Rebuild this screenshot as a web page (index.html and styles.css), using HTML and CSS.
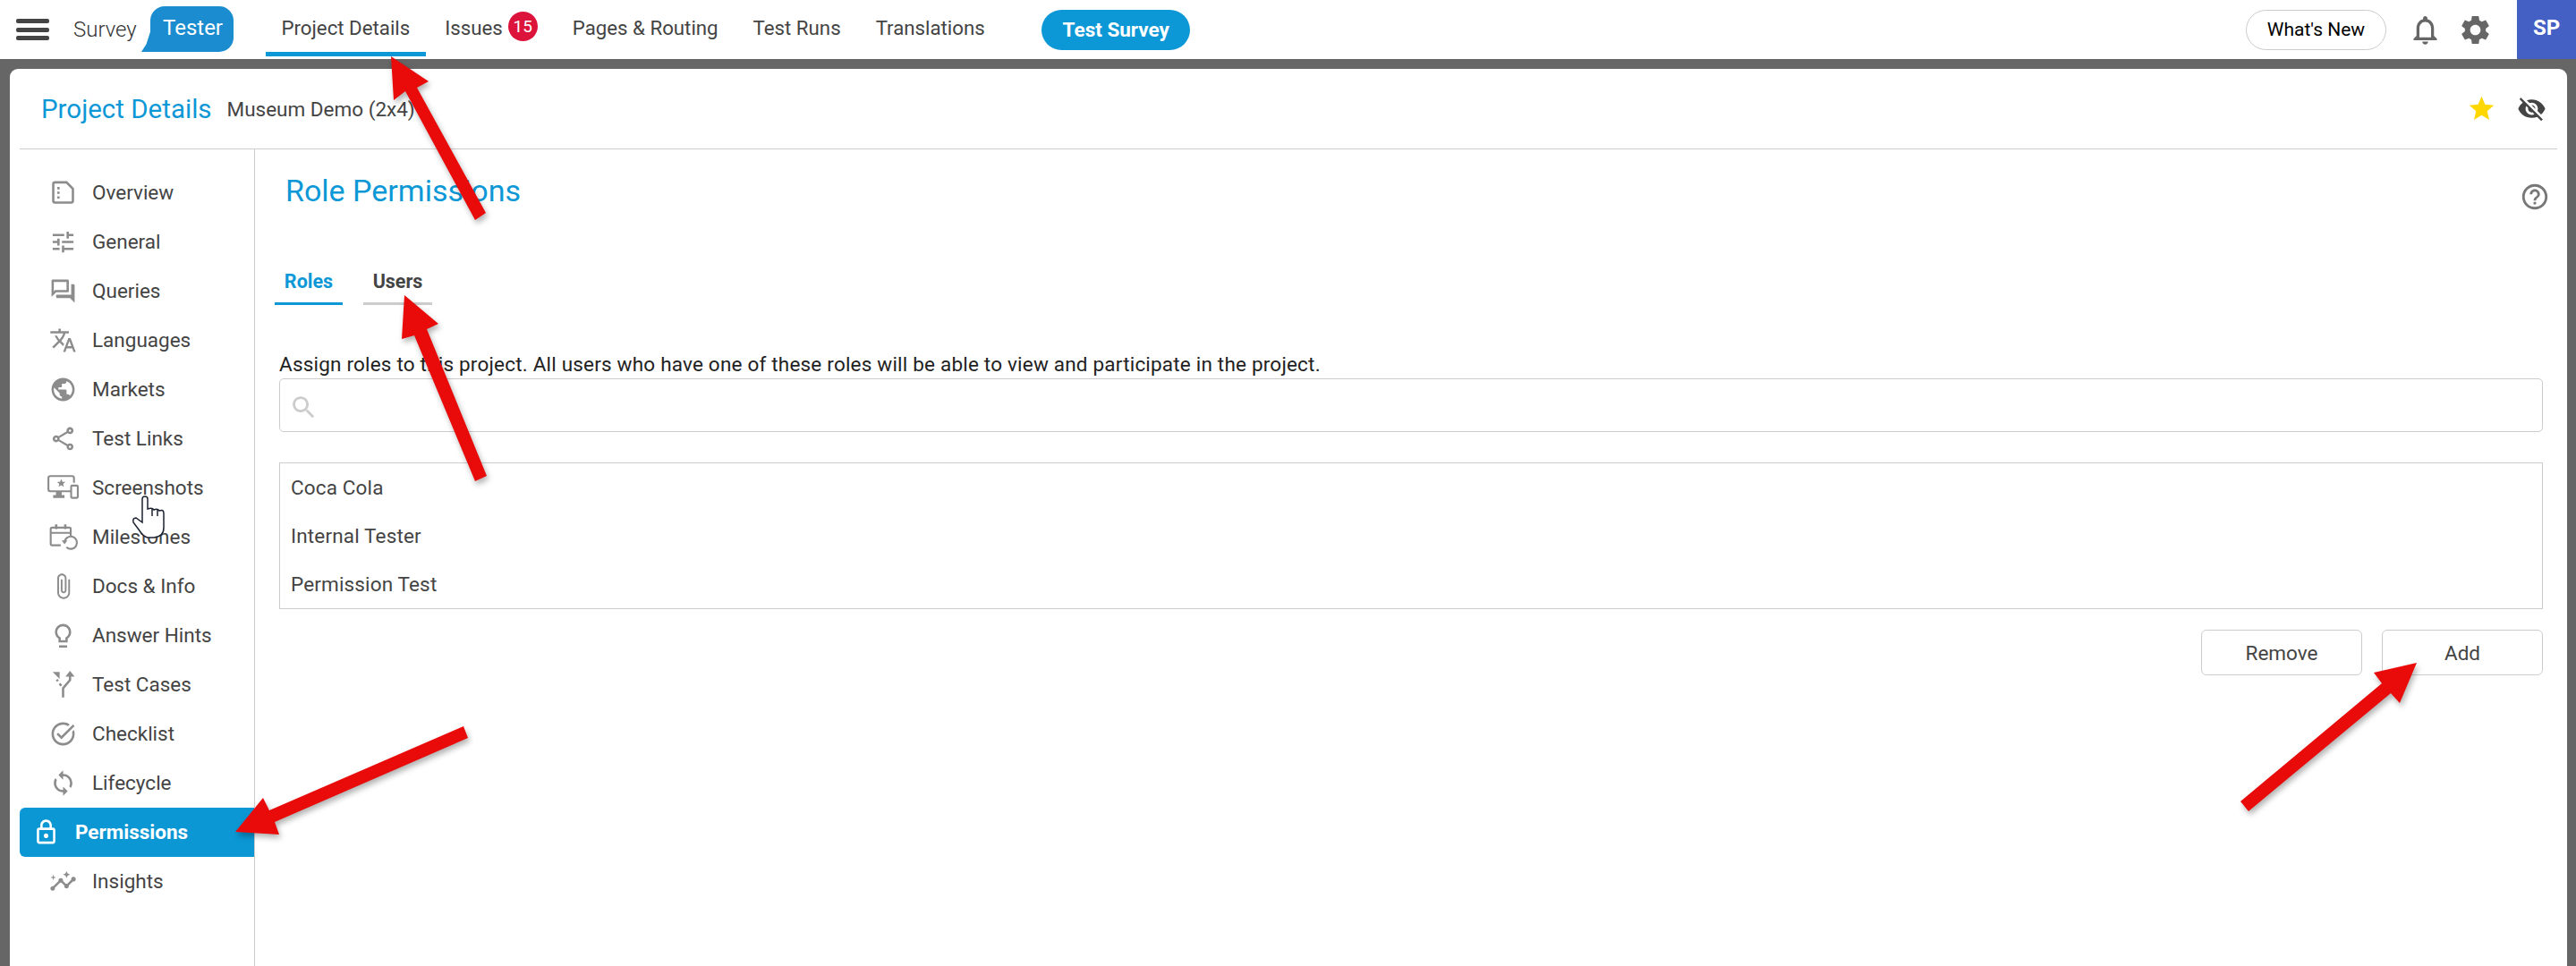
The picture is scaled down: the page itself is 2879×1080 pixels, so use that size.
FILE: index.html
```html
<!DOCTYPE html>
<html lang="en">
<head>
  <meta charset="UTF-8">
  <title>Project Details - Role Permissions</title>
  <link rel="stylesheet" href="styles.css">
</head>
<body>

  <!-- top bar -->
  <header class="topbar">
    <div class="hamburger"><span></span><span></span><span></span></div>
    <span class="brand-survey">Survey</span>
    <span class="brand-tester">Tester</span>
    <nav class="topnav">
      <a class="topnav-item active">Project Details</a>
      <a class="topnav-item">Issues <span class="badge">15</span></a>
      <a class="topnav-item">Pages &amp; Routing</a>
      <a class="topnav-item">Test Runs</a>
      <a class="topnav-item">Translations</a>
    </nav>
    <button class="test-survey">Test Survey</button>
    <div class="topbar-right">
      <button class="whats-new">What's New</button>
      <svg class="top-icon bell" viewBox="0 0 24 24"><path d="M12 22c1.1 0 2-.9 2-2h-4c0 1.1.9 2 2 2zm6-6v-5c0-3.07-1.63-5.64-4.5-6.32V4c0-.83-.67-1.5-1.5-1.5s-1.5.67-1.5 1.5v.68C7.64 5.36 6 7.92 6 11v5l-2 2v1h16v-1l-2-2zm-2 1H8v-6c0-2.48 1.51-4.5 4-4.5s4 2.02 4 4.5v6z"/></svg>
      <svg class="top-icon gear" viewBox="0 0 24 24"><path d="M19.14 12.94c.04-.3.06-.61.06-.94 0-.32-.02-.64-.07-.94l2.03-1.58c.18-.14.23-.41.12-.61l-1.92-3.32c-.12-.22-.37-.29-.59-.22l-2.39.96c-.5-.38-1.03-.7-1.62-.94l-.36-2.54c-.04-.24-.24-.41-.48-.41h-3.84c-.24 0-.43.17-.47.41l-.36 2.54c-.59.24-1.13.57-1.62.94l-2.39-.96c-.22-.08-.47 0-.59.22L2.74 8.87c-.12.21-.08.47.12.61l2.03 1.58c-.05.3-.09.63-.09.94s.02.64.07.94l-2.03 1.58c-.18.14-.23.41-.12.61l1.92 3.32c.12.22.37.29.59.22l2.39-.96c.5.38 1.03.7 1.62.94l.36 2.54c.05.24.24.41.48.41h3.84c.24 0 .44-.17.47-.41l.36-2.54c.59-.24 1.13-.56 1.62-.94l2.39.96c.22.08.47 0 .59-.22l1.92-3.32c.12-.22.07-.47-.12-.61l-2.01-1.58zM12 15.6c-1.98 0-3.6-1.62-3.6-3.6s1.62-3.6 3.6-3.6 3.6 1.62 3.6 3.6-1.62 3.6-3.6 3.6z"/></svg>
      <div class="avatar">SP</div>
    </div>
  </header>

  <div class="shell">
    <div class="panel">

      <div class="panel-head">
        <span class="panel-title">Project Details</span>
        <span class="panel-sub">Museum Demo (2x4)</span>
        <svg class="head-icon star" viewBox="0 0 24 24"><path d="M12 17.27L18.18 21l-1.64-7.03L22 9.24l-7.19-.61L12 2 9.19 8.63 2 9.24l5.46 4.73L5.82 21z"/></svg>
        <svg class="head-icon eye" viewBox="0 0 24 24"><path d="M12 7c2.76 0 5 2.24 5 5 0 .65-.13 1.26-.36 1.83l2.92 2.92c1.51-1.26 2.7-2.89 3.43-4.75-1.73-4.39-6-7.5-11-7.5-1.4 0-2.74.25-3.98.7l2.16 2.16C10.74 7.13 11.35 7 12 7zM2 4.27l2.28 2.28.46.46C3.08 8.3 1.78 10.02 1 12c1.73 4.39 6 7.5 11 7.5 1.55 0 3.03-.3 4.38-.84l.42.42L19.73 22 21 20.73 3.27 3 2 4.27zM7.53 9.8l1.55 1.55c-.05.21-.08.43-.08.65 0 1.66 1.34 3 3 3 .22 0 .44-.03.65-.08l1.55 1.55c-.67.33-1.41.53-2.2.53-2.76 0-5-2.24-5-5 0-.79.2-1.53.53-2.2zm4.31-.78l3.15 3.15.02-.16c0-1.66-1.34-3-3-3l-.17.01z"/></svg>
      </div>

      <div class="panel-body">

        <!-- side menu -->
        <aside class="sidebar">
          <a class="side-item"><span class="side-icon"><svg viewBox="0 0 24 24"><path class="line" d="M3.5 4.5a1.5 1.5 0 0 1 1.5-1.5h10l5.500 5.500v10.500a1.500 1.500 0 0 1-1.500 1.500h-14a1.500 1.500 0 0 1-1.500-1.500z"/><path d="M7 7h2v2H7zM7 11h2v2H7zM7 15h2v2H7z"/></svg></span>Overview</a>
          <a class="side-item"><span class="side-icon"><svg viewBox="0 0 24 24"><path d="M3 17v2h6v-2H3zM3 5v2h10V5H3zm10 16v-2h8v-2h-8v-2h-2v6h2zM7 9v2H3v2h4v2h2V9H7zm14 4v-2H11v2h10zm-6-4h2V7h4V5h-4V3h-2v6z"/></svg></span>General</a>
          <a class="side-item"><span class="side-icon"><svg viewBox="0 0 24 24"><path d="M15 4v7H5.170L4 12.170V4h11m1-2H3c-.55 0-1 .45-1 1v14l4-4h10c.55 0 1-.45 1-1V3c0-.55-.45-1-1-1zm5 4h-2v9H6v2c0 .55.45 1 1 1h11l4 4V7c0-.55-.45-1-1-1z"/></svg></span>Queries</a>
          <a class="side-item"><span class="side-icon"><svg viewBox="0 0 24 24"><path d="M12.870 15.070l-2.540-2.510.03-.03c1.740-1.940 2.980-4.170 3.710-6.530H17V4h-7V2H8v2H1v1.990h11.170C11.500 7.920 10.440 9.750 9 11.350 8.070 10.320 7.300 9.190 6.690 8h-2c.73 1.630 1.730 3.170 2.980 4.560l-5.090 5.020L4 19l5-5 3.110 3.110.76-2.040zM18.500 10h-2L12 22h2l1.120-3h4.750L21 22h2l-4.500-12zm-2.620 7l1.620-4.330L19.120 17h-3.240z"/></svg></span>Languages</a>
          <a class="side-item"><span class="side-icon"><svg viewBox="0 0 24 24"><path d="M12 2C6.480 2 2 6.480 2 12s4.480 10 10 10 10-4.480 10-10S17.520 2 12 2zm-1 17.930c-3.950-.49-7-3.850-7-7.930 0-.62.08-1.210.21-1.790L9 15v1c0 1.100.9 2 2 2v1.930zm6.900-2.540c-.26-.81-1-1.390-1.900-1.390h-1v-3c0-.55-.45-1-1-1H8v-2h2c.55 0 1-.45 1-1V7h2c1.100 0 2-.9 2-2v-.41c2.930 1.190 5 4.060 5 7.410 0 2.080-.8 3.970-2.100 5.390z"/></svg></span>Markets</a>
          <a class="side-item"><span class="side-icon"><svg viewBox="0 0 24 24"><path d="M18 16.080c-.76 0-1.440.3-1.960.77L8.910 12.700c.05-.23.09-.46.09-.7s-.04-.47-.09-.7l7.050-4.110c.54.5 1.250.81 2.040.81 1.660 0 3-1.340 3-3s-1.340-3-3-3-3 1.340-3 3c0 .24.04.47.09.7L8.040 9.810C7.500 9.310 6.790 9 6 9c-1.660 0-3 1.340-3 3s1.340 3 3 3c.79 0 1.500-.31 2.040-.81l7.120 4.160c-.05.21-.08.43-.08.65 0 1.610 1.310 2.920 2.920 2.920s2.920-1.310 2.920-2.920-1.310-2.920-2.920-2.920zM18 4c.55 0 1 .45 1 1s-.45 1-1 1-1-.45-1-1 .45-1 1-1zM6 13c-.55 0-1-.45-1-1s.45-1 1-1 1 .45 1 1-.45 1-1 1zm12 7.020c-.55 0-1-.45-1-1s.45-1 1-1 1 .45 1 1-.45 1-1 1z"/></svg></span>Test Links</a>
          <a class="side-item"><span class="side-icon"><svg class="wide" viewBox="0 0 34 28"><path class="line" d="M26 18H4a2 2 0 0 1-2-2V4a2 2 0 0 1 2-2h23a2 2 0 0 1 2 2v5"/><path d="M10 18h6v4h3v3H7v-3h3zM15.500 5l1.300 3h3.200l-2.500 2.200.8 3.200-2.800-1.700-2.800 1.700.8-3.200L11 8h3.200z"/><rect class="line" x="26" y="12" width="7" height="13" rx="1"/></svg></span>Screenshots</a>
          <a class="side-item"><span class="side-icon"><svg class="wide" viewBox="0 0 30 30"><path class="line" d="M13 24H4a1.500 1.500 0 0 1-1.500-1.500V7A1.500 1.500 0 0 1 4 5.500h18A1.500 1.500 0 0 1 23.500 7v8M2.500 11h21"/><path d="M7 2h2.500v5H7zM16.500 2H19v5h-2.500z"/><path class="line" d="M17 21a6.500 6.500 0 1 1 2 5"/><path d="M14 19h6l-3 4z"/></svg></span>Milestones</a>
          <a class="side-item"><span class="side-icon"><svg viewBox="0 0 24 24"><path d="M16.500 6v11.500c0 2.210-1.790 4-4 4s-4-1.790-4-4V5c0-1.380 1.120-2.500 2.500-2.500s2.500 1.120 2.500 2.500v10.500c0 .55-.45 1-1 1s-1-.45-1-1V6H10v9.500c0 1.380 1.120 2.500 2.500 2.500s2.500-1.120 2.500-2.500V5c0-2.210-1.790-4-4-4S7 2.790 7 5v12.500c0 3.040 2.460 5.500 5.500 5.500s5.500-2.460 5.500-5.500V6h-1.500z"/></svg></span>Docs &amp; Info</a>
          <a class="side-item"><span class="side-icon"><svg viewBox="0 0 24 24"><path d="M8.500 20.500h7v2h-7zM12 2C8.140 2 5 5.140 5 9c0 2.380 1.190 4.470 3 5.740V18h8v-3.260c1.810-1.270 3-3.360 3-5.740 0-3.860-3.140-7-7-7zm2.850 11.100l-.85.6V16h-4v-2.300l-.85-.6C7.800 12.160 7 10.630 7 9c0-2.760 2.240-5 5-5s5 2.240 5 5c0 1.630-.8 3.160-2.150 4.100z"/></svg></span>Answer Hints</a>
          <a class="side-item"><span class="side-icon"><svg viewBox="0 0 24 24"><path class="line" d="M12 23v-8l6-7V4"/><path d="M18 0l4 5h-8z"/><path class="line" d="M10.500 13l-1.500-2M7.500 9L6.500 7.500"/><path d="M3 1h6v6z"/></svg></span>Test Cases</a>
          <a class="side-item"><span class="side-icon"><svg viewBox="0 0 24 24"><path d="M22 5.180L10.590 16.600l-4.240-4.240 1.410-1.410 2.830 2.830 10-10L22 5.180zm-2.210 5.040c.13.57.21 1.170.21 1.780 0 4.420-3.580 8-8 8s-8-3.580-8-8 3.580-8 8-8c1.580 0 3.040.46 4.280 1.250l1.440-1.440C16.100 2.670 14.130 2 12 2 6.480 2 2 6.480 2 12s4.480 10 10 10 10-4.480 10-10c0-1.190-.22-2.330-.6-3.390l-1.610 1.610z"/></svg></span>Checklist</a>
          <a class="side-item"><span class="side-icon"><svg viewBox="0 0 24 24"><path d="M12 4V1L8 5l4 4V6c3.310 0 6 2.690 6 6 0 1.010-.25 1.970-.7 2.800l1.460 1.460C19.540 15.030 20 13.570 20 12c0-4.420-3.580-8-8-8zm0 14c-3.310 0-6-2.690-6-6 0-1.010.25-1.970.7-2.800L5.240 7.740C4.460 8.970 4 10.430 4 12c0 4.420 3.580 8 8 8v3l4-4-4-4v3z"/></svg></span>Lifecycle</a>
          <a class="side-item active"><span class="side-icon"><svg viewBox="0 0 24 24"><path d="M18 8h-1V6c0-2.760-2.240-5-5-5S7 3.240 7 6v2H6c-1.100 0-2 .9-2 2v10c0 1.100.9 2 2 2h12c1.100 0 2-.9 2-2V10c0-1.100-.9-2-2-2zM9 6c0-1.660 1.340-3 3-3s3 1.340 3 3v2H9V6zm9 14H6V10h12v10zm-6-3c1.100 0 2-.9 2-2s-.9-2-2-2-2 .9-2 2 .9 2 2 2z"/></svg></span>Permissions</a>
          <a class="side-item"><span class="side-icon"><svg viewBox="0 0 24 24"><path d="M21 8c-1.450 0-2.260 1.440-1.930 2.510l-3.550 3.560c-.3-.09-.74-.09-1.040 0l-2.550-2.550C12.270 10.450 11.460 9 10 9c-1.450 0-2.270 1.440-1.930 2.520l-4.560 4.550C2.440 15.740 1 16.550 1 18c0 1.100.9 2 2 2 1.450 0 2.260-1.440 1.930-2.510l4.550-4.560c.3.09.74.09 1.040 0l2.550 2.550C12.730 16.550 13.540 18 15 18c1.450 0 2.270-1.440 1.930-2.520l3.560-3.550c1.070.33 2.510-.48 2.510-1.930 0-1.100-.9-2-2-2zM15 9l.94-2.070L18 6l-2.060-.93L15 3l-.92 2.070L12 6l2.080.93zM3.500 11L4 9l2-.5L4 8l-.5-2L3 8l-2 .5L3 9z"/></svg></span>Insights</a>
        </aside>

        <!-- role permissions -->
        <main class="content">
          <div class="content-head">
            <h2>Role Permissions</h2>
            <svg class="help" viewBox="0 0 24 24"><path d="M11 18h2v-2h-2v2zm1-16C6.480 2 2 6.480 2 12s4.480 10 10 10 10-4.480 10-10S17.520 2 12 2zm0 18c-4.410 0-8-3.590-8-8s3.590-8 8-8 8 3.590 8 8-3.590 8-8 8zm0-14c-2.210 0-4 1.790-4 4h2c0-1.100.9-2 2-2s2 .9 2 2c0 2-3 1.750-3 5h2c0-2.250 3-2.500 3-5 0-2.210-1.790-4-4-4z"/></svg>
          </div>

          <div class="tabs">
            <a class="tab active">Roles</a>
            <a class="tab">Users</a>
          </div>

          <div class="form">
            <p class="hint">Assign roles to this project. All users who have one of these roles will be able to view and participate in the project.</p>
            <div class="search">
              <svg viewBox="0 0 24 24"><path d="M15.500 14h-.79l-.28-.27C15.410 12.590 16 11.110 16 9.500 16 5.910 13.090 3 9.500 3S3 5.910 3 9.500 5.910 16 9.500 16c1.610 0 3.090-.59 4.230-1.570l.27.28v.79l5 4.990L20.490 19l-4.990-5zm-6 0C7.010 14 5 11.990 5 9.500S7.010 5 9.500 5 14 7.010 14 9.500 11.990 14 9.500 14z"/></svg>
            </div>
            <ul class="role-list">
              <li>Coca Cola</li>
              <li>Internal Tester</li>
              <li>Permission Test</li>
            </ul>
            <div class="actions">
              <button class="btn">Remove</button>
              <button class="btn">Add</button>
            </div>
          </div>
        </main>
      </div>
    </div>
  </div>

  <!-- red callout arrows and mouse pointer drawn over the page -->
  <svg class="overlay" viewBox="0 0 2879 1080">
    <g class="arrows">
      <polygon points="437,63 479,91 466,98 543,238 531,246 453,102 440,112"/>
      <polygon points="263,930 294,892 301,906 518,812 523,825 307,919 312,933"/>
      <polygon points="452,330 490,362 477,368 544,532 531,538 463,375 449,379"/>
      <polygon points="2701,741 2653,752 2662,764 2504,896 2513,907 2672,775 2682,786"/>
    </g>
    <path class="hand" d="M159 584V558Q159 555 162 555Q165 555 165 558V569Q170 567 172 570Q176 568 178 571Q183 569 183 574V590Q183 600 172 601H165Q160 600 155 592L149 584Q148 579 152 579Z"/>
    <path class="hand-lines" d="M170 569V577M176 570V577"/>
  </svg>

</body>
</html>
```

FILE: styles.css
```css
* { box-sizing: border-box; }
html, body { height: 100%; }
body {
  margin: 0;
  position: relative;
  display: flex;
  flex-direction: column;
  overflow: hidden;
  background: #666;
  color: #444;
  font-family: 'Roboto', 'Liberation Sans', sans-serif;
  font-size: 22.5px;
}
a { color: inherit; text-decoration: none; }
button { font-family: inherit; cursor: pointer; }
svg { display: block; fill: currentColor; }

/* top bar */
.topbar {
  display: flex;
  align-items: center;
  flex: 0 0 66px;
  height: 66px;
  padding-left: 18px;
  background: #fff;
}
.hamburger {
  display: flex;
  flex-direction: column;
  justify-content: space-between;
  width: 37px;
  height: 24px;
  margin-right: 27px;
}
.hamburger span { height: 5px; border-radius: 2px; background: #444; }
.brand-survey { font-size: 24px; font-weight: 300; width: 86px; color: #333; }
.brand-tester {
  position: relative;
  width: 93px;
  height: 51px;
  margin-top: -1px;
  padding-left: 14px;
  line-height: 48px;
  font-size: 24px;
  color: #fff;
  background: #1a8ccf;
  border-radius: 16px 16px 16px 0;
}
.brand-tester::before {
  content: '';
  position: absolute;
  left: -10px;
  bottom: 0;
  width: 14px;
  height: 22px;
  background: #1a8ccf;
  clip-path: polygon(70% 0, 100% 0, 100% 100%, 0 100%, 40% 60%);
}
.topnav { display: flex; gap: 4px; height: 66px; margin-left: 36px; font-size: 22.25px; }
.topnav-item {
  display: flex;
  align-items: center;
  height: 63px;
  padding: 4px 17.5px 0;
  border-bottom: 5px solid transparent;
  color: #444;
  white-space: nowrap;
}
.topnav-item.active { border-bottom-color: #0c98d6; }
.badge {
  display: inline-flex;
  align-items: center;
  justify-content: center;
  width: 33px;
  height: 33px;
  margin: -4px 0 0 6px;
  border-radius: 50%;
  background: #dc143c;
  color: #fff;
  font-size: 19px;
}
.test-survey {
  width: 166px;
  height: 45px;
  margin-left: 46px;
  border: 0;
  border-radius: 23px;
  background: #0c98d6;
  color: #fff;
  font-size: 22.5px;
  font-weight: 700;
}
.topbar-right { display: flex; align-items: center; margin-left: auto; height: 66px; }
.whats-new {
  width: 157px;
  height: 45px;
  border: 1px solid #ccc;
  border-radius: 23px;
  background: #fff;
  color: #000;
  font-size: 21px;
}
.top-icon { width: 39px; height: 39px; color: #666; }
.bell { margin-left: 24px; }
.gear { margin-left: 17px; }
.avatar {
  width: 66px;
  height: 66px;
  margin-left: 27px;
  background: #4460c4;
  color: #fff;
  font-size: 24px;
  font-weight: 700;
  line-height: 62px;
  text-align: center;
}

/* panel */
.shell { flex: 1; min-height: 0; padding: 11px 10px 0 11px; }
.panel { display: flex; flex-direction: column; height: 100%; background: #fff; border-radius: 9px 9px 0 0; }
.panel-head {
  display: flex;
  align-items: center;
  flex: 0 0 90px;
  margin: 0 11px;
  padding: 0 12px 0 24px;
  border-bottom: 1px solid #ccc;
}
.panel-title { font-size: 29.5px; color: #0c98d6; }
.panel-sub { margin-left: 17px; font-size: 22.5px; color: #444; }
.head-icon { width: 33px; height: 33px; }
.star { margin-left: auto; color: #ffd700; }
.eye { margin-left: 23px; color: #444; }
.panel-body { display: flex; flex: 1; min-height: 0; }

/* side menu */
.sidebar {
  flex: 0 0 274px;
  padding: 21px 0 0 11px;
  border-right: 1px solid #ccc;
}
.side-item {
  display: flex;
  align-items: center;
  gap: 15px;
  height: 55px;
  padding: 0 0 1px 30px;
  color: #444;
}
.side-icon { display: flex; justify-content: center; flex: 0 0 36px; color: #8c8c8c; }
.side-icon svg { width: 31px; height: 31px; }
.side-icon svg.wide { width: 36px; height: 32px; }
.line { fill: none; stroke: currentColor; stroke-width: 2; }
.side-item.active {
  padding-left: 11px;
  border-radius: 6px 0 0 6px;
  background: #0b97d4;
  color: #fff;
  font-weight: 700;
}
.side-item.active .side-icon { color: #fff; }

/* content */
.content { flex: 1; min-width: 0; padding: 0 27px 0 22px; }
.content-head { display: flex; justify-content: space-between; height: 66px; padding: 26px 0 0 12px; }
.content-head h2 { margin: 0; font-size: 34px; font-weight: 400; line-height: 40px; color: #0c98d6; }
.help { width: 34px; height: 34px; margin: 10px -8px 0 0; color: #777; }
.tabs { display: flex; gap: 23px; margin-top: 70px; }
.tab {
  width: 77px;
  height: 38px;
  border-bottom: 3px solid #ccc;
  font-size: 21.5px;
  font-weight: 700;
  line-height: 24px;
  text-align: center;
  color: #444;
}
.tab.active { width: 76px; border-bottom-color: #0c98d6; color: #0c98d6; }
.form { padding-left: 5px; }
.hint { margin: 54px 0 4px; line-height: 24px; color: #222; letter-spacing: .2px; white-space: nowrap; }
.search {
  display: flex;
  align-items: center;
  height: 60px;
  padding-left: 10px;
  border: 1px solid #ccc;
  border-radius: 5px;
  color: #ccc;
}
.search svg { width: 33px; height: 33px; margin-top: 4px; }
.role-list { margin: 34px 0 0; padding: 0; border: 1px solid #ccc; list-style: none; }
.role-list li { height: 54px; padding-left: 12px; line-height: 54px; letter-spacing: .15px; color: #444; }
.actions { display: flex; justify-content: flex-end; gap: 22px; margin-top: 23px; }
.btn {
  width: 180px;
  height: 51px;
  border: 1px solid #ccc;
  border-radius: 6px;
  background: #fff;
  color: #444;
  font-size: 22.5px;
}

/* arrows */
.overlay { position: absolute; left: 0; top: 0; width: 2879px; height: 1080px; pointer-events: none; }
.arrows { fill: #e90a0a; filter: drop-shadow(2px 4px 3px rgba(0,0,0,.3)); }
.hand { fill: #fff; stroke: #1c2230; stroke-width: 1.500; }
.hand-lines { fill: none; stroke: #1c2230; stroke-width: 1.500; }
```
